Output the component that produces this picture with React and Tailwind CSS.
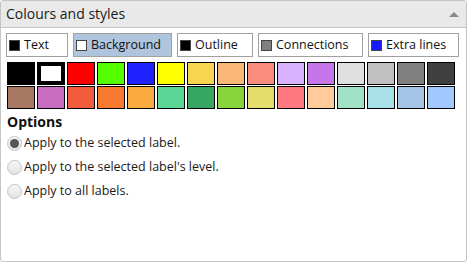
import { useState } from "react";

const row1 = ["#000000", "#ffffff", "#ff0000", "#55ff00", "#2121ff", "#ffff00", "#f8d54f", "#fbb775", "#fb8b7c", "#d9b1ff", "#c676e8", "#e0e0e0", "#c0c0c0", "#808080", "#404040"];
const row2 = ["#a67762", "#c76cc1", "#f25b3c", "#f87a30", "#f9ab3f", "#5bd694", "#38a663", "#87d43d", "#e5dd6b", "#ff7981", "#ffcb9a", "#9fe2c5", "#a7e0e8", "#a5c5e6", "#a2c9ff"];

const modes = [
  { label: "Text", color: "#000000" },
  { label: "Background", color: "#ffffff" },
  { label: "Outline", color: "#000000" },
  { label: "Connections", color: "#808080" },
  { label: "Extra lines", color: "#1a1aff" },
];

const options = [
  "Apply to the selected label.",
  "Apply to the selected label's level.",
  "Apply to all labels.",
];

export default function App() {
  const [mode, setMode] = useState(1);
  const [selected, setSelected] = useState("0-1");
  const [option, setOption] = useState(0);

  return (
    <div className="w-[467px] h-[262px] bg-white font-['Open_Sans',sans-serif] text-[13px] text-[#222]">
      <div className="h-full border border-[#c5c5c5] rounded-[3px] flex flex-col overflow-hidden">
        {/* Header */}
        <div className="h-[27px] shrink-0 bg-[#e9e9e9] border-b border-[#c5c5c5] flex items-center justify-between pl-[5px] pr-[7px]">
          <span className="text-[14px] text-[#1a1a1a] leading-none">Colours and styles</span>
          <span className="w-0 h-0 border-l-[5px] border-r-[5px] border-b-[5px] border-l-transparent border-r-transparent border-b-[#8a8a8a]" />
        </div>

        <div className="px-[5px] pt-[5px]">
          {/* Mode buttons */}
          <div className="flex gap-[5px] h-[24px]">
            {modes.map((m, i) => (
              <button
                key={m.label}
                onClick={() => setMode(i)}
                className={`h-full flex items-center gap-[4px] pl-[2px] pr-[6px] border border-[#a0a0a0] leading-none text-[12.5px] ${
                  mode === i ? "bg-[#b0c4de]" : "bg-white"
                } ${["w-[62px]", "w-[99px]", "w-[76px]", "w-[105px]", "w-[91px]"][i]}`}
              >
                <span className="w-[11px] h-[11px] border border-[#444] shrink-0" style={{ backgroundColor: m.color }} />
                <span className="text-[#111]">{m.label}</span>
              </button>
            ))}
          </div>

          {/* Swatches */}
          <div className="mt-[5px] pl-[1px] flex flex-col gap-[1px]">
            {[row1, row2].map((row, r) => (
              <div key={r} className="flex gap-[2px]">
                {row.map((c, i) => {
                  const key = `${r}-${i}`;
                  return (
                    <button
                      key={key}
                      onClick={() => setSelected(key)}
                      className={`w-[28px] h-[23px] border-black ${selected === key ? "border-[4px]" : "border-[1.5px]"}`}
                      style={{ backgroundColor: c }}
                    />
                  );
                })}
              </div>
            ))}
          </div>

          {/* Options */}
          <div className="mt-[3px] pl-[1px]">
            <div className="font-bold text-[14px] text-[#111] leading-[19px]">Options</div>
            <div className="flex flex-col">
              {options.map((o, i) => (
                <label key={o} onClick={() => setOption(i)} className="flex items-center gap-[2px] h-[24px] cursor-pointer">
                  <span className="w-[15px] h-[15px] rounded-full border border-[#c5c5c5] bg-gradient-to-b from-[#f6f6f6] to-[#e4e4e4] flex items-center justify-center">
                    {option === i && <span className="w-[9px] h-[9px] rounded-full bg-[#555]" />}
                  </span>
                  <span className="text-[12.5px] text-[#1a1a1a]">{o}</span>
                </label>
              ))}
            </div>
          </div>
        </div>
      </div>
    </div>
  );
}
